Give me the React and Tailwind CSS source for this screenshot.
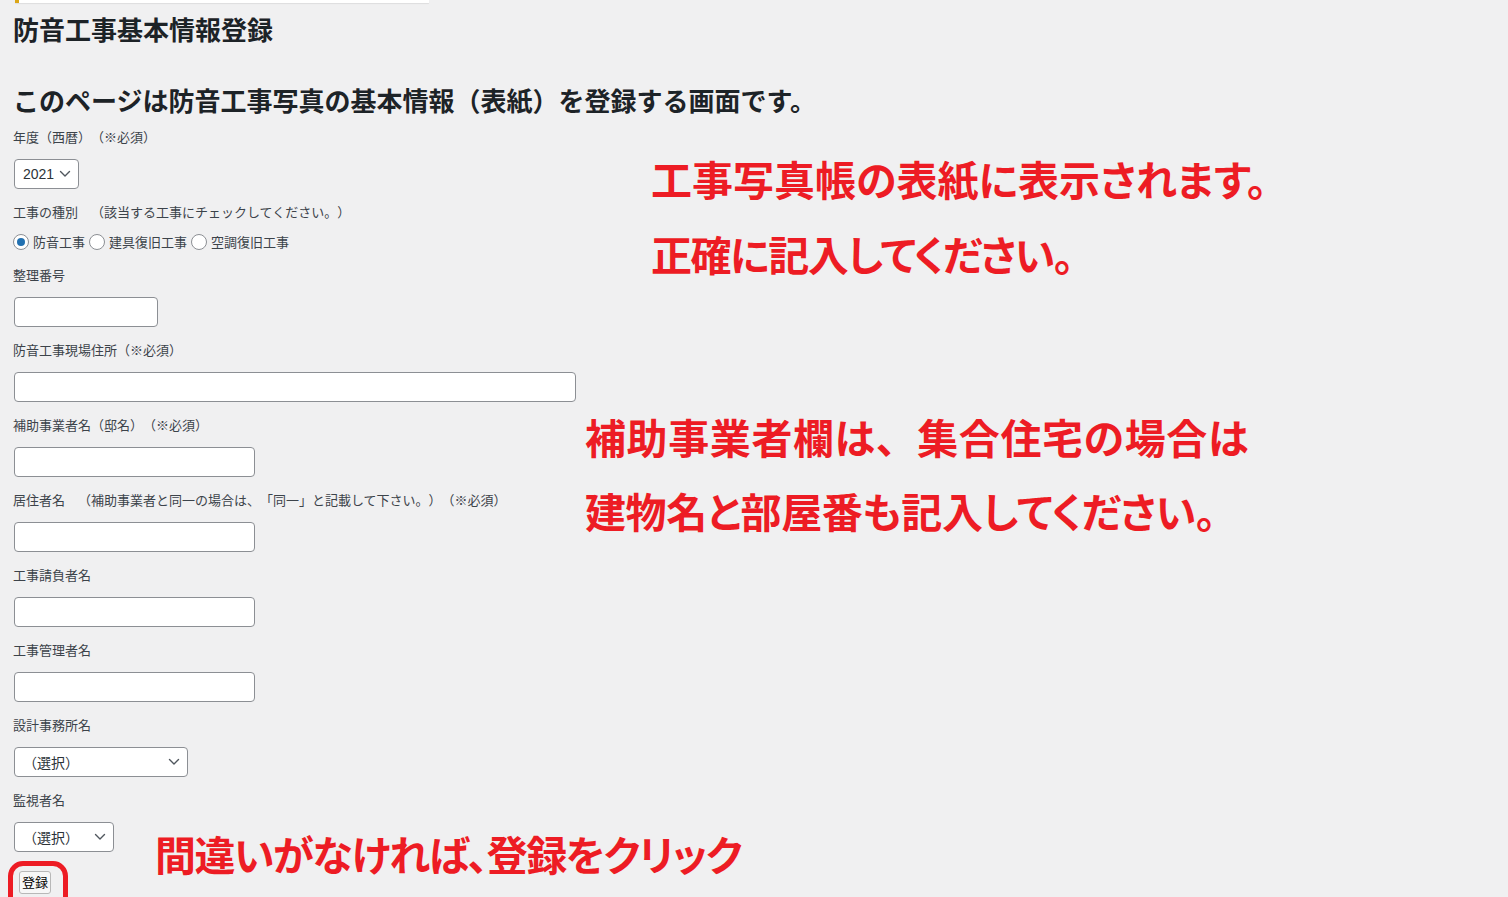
import React from "react";

const Chevron = () => (
  <svg width="12" height="8" viewBox="0 0 12 8" fill="none" className="shrink-0">
    <path d="M1.5 1.5 L6 6 L10.5 1.5" stroke="#50575e" strokeWidth="1.4" strokeLinecap="round" strokeLinejoin="round" />
  </svg>
);

const Label = ({ children }) => (
  <div className="h-[20px] leading-[20px] text-[13px] text-[#3c434a] pl-[13px] whitespace-nowrap">{children}</div>
);

const TextInput = ({ w }) => (
  <div className={`${w} h-[30px] ml-[14px] bg-white border border-[#8c8f94] rounded-[4px]`} />
);

const Field = ({ label, w }) => (
  <div className="pb-[13px]">
    <Label>{label}</Label>
    <div className="mt-[12px]">
      <TextInput w={w} />
    </div>
  </div>
);

const FakeSelect = ({ w, text, textCls }) => (
  <div className={`${w} h-[30px] ml-[14px] bg-white border border-[#8c8f94] rounded-[4px] flex items-center justify-between pl-[8px] pr-[7px] text-[14px] text-[#2c3338]`}>
    <span className={textCls}>{text}</span>
    <Chevron />
  </div>
);

const Radio = ({ checked, label }) => (
  <span className="inline-flex items-center">
    <span className="w-[16px] h-[16px] rounded-full border border-[#8c8f94] bg-white flex items-center justify-center mr-[4px]">
      {checked && <span className="w-[8px] h-[8px] rounded-full bg-[#2271b1]" />}
    </span>
    <span className="mr-[4px]">{label}</span>
  </span>
);

export default function App() {
  return (
    <div className="relative w-full h-[897px] overflow-hidden bg-[#f0f0f1] font-['Noto_Sans_CJK_JP',sans-serif] [text-spacing-trim:space-all]">
      {/* notice bar remnant */}
      <div className="ml-[15px] w-[414px] h-[3px] bg-white border-l-4 border-[#dba617] shadow-[0_1px_1px_rgba(0,0,0,0.08)]" />

      <h1 className="mt-[11px] pl-[13px] text-[26px] leading-[30px] font-bold text-[#1d2327] whitespace-nowrap">防音工事基本情報登録</h1>
      <h2 className="mt-[41px] pl-[13px] text-[26px] leading-[30px] font-bold text-[#1d2327] whitespace-nowrap">このページは防音工事写真の基本情報（表紙）を登録する画面です。</h2>

      <div className="mt-[12px]">
        {/* 年度 */}
        <div className="pb-[13px]">
          <Label>年度（西暦）（※必須）</Label>
          <div className="mt-[12px]">
            <FakeSelect w="w-[65px]" text="2021" textCls="font-['Liberation_Sans',sans-serif]" />
          </div>
        </div>

        {/* 工事の種別 */}
        <div className="pb-[13px]">
          <Label>工事の種別　（該当する工事にチェックしてください。）</Label>
          <div className="mt-[10px] h-[20px] flex items-center pl-[13px] text-[13px] text-[#3c434a] whitespace-nowrap">
            <Radio checked label="防音工事" />
            <Radio label="建具復旧工事" />
            <Radio label="空調復旧工事" />
          </div>
        </div>

        <Field label="整理番号" w="w-[144px]" />
        <Field label="防音工事現場住所（※必須）" w="w-[562px]" />
        <Field label="補助事業者名（邸名）（※必須）" w="w-[241px]" />
        <Field label="居住者名　（補助事業者と同一の場合は、「同一」と記載して下さい。）（※必須）" w="w-[241px]" />
        <Field label="工事請負者名" w="w-[241px]" />
        <Field label="工事管理者名" w="w-[241px]" />

        <div className="pb-[13px]">
          <Label>設計事務所名</Label>
          <div className="mt-[12px]">
            <FakeSelect w="w-[174px]" text="（選択）" />
          </div>
        </div>
        <div>
          <Label>監視者名</Label>
          <div className="mt-[12px]">
            <FakeSelect w="w-[100px]" text="（選択）" />
          </div>
        </div>

        <div className="mt-[16px] pl-[19px]">
          <button className="h-[23px] px-[2px] leading-[20px] text-[13px] text-black bg-[#f7f7f7] border border-[#b8b8b8] rounded-[3px]">登録</button>
        </div>
      </div>

      {/* annotations */}
      <div className="absolute left-[8px] top-[861px] w-[60px] h-[50px] border-[5px] border-[#ed1c24] rounded-[15px]" />

      <div className="absolute left-[651px] top-[158px] text-[41px] leading-[41px] font-bold text-[#ed1c24] whitespace-nowrap [font-feature-settings:'palt']">工事写真帳の表紙に表示されます。</div>
      <div className="absolute left-[651px] top-[233px] text-[41px] leading-[41px] font-bold text-[#ed1c24] whitespace-nowrap tracking-[-1.5px] [font-feature-settings:'palt']">正確に記入してください。</div>
      <div className="absolute left-[585px] top-[416px] text-[41px] leading-[41px] font-bold text-[#ed1c24] whitespace-nowrap tracking-[0.6px] [font-feature-settings:'palt']">補助事業者欄は<span className="[font-feature-settings:normal]">、</span>集合住宅の場合は</div>
      <div className="absolute left-[585px] top-[490px] text-[41px] leading-[41px] font-bold text-[#ed1c24] whitespace-nowrap tracking-[-0.4px] [font-feature-settings:'palt']">建物名と部屋番も記入してください。</div>
      <div className="absolute left-[155px] top-[833px] text-[41px] leading-[41px] font-bold text-[#ed1c24] whitespace-nowrap tracking-[-1.5px] [font-feature-settings:'palt']">間違いがなければ、登録をクリック</div>
    </div>
  );
}
